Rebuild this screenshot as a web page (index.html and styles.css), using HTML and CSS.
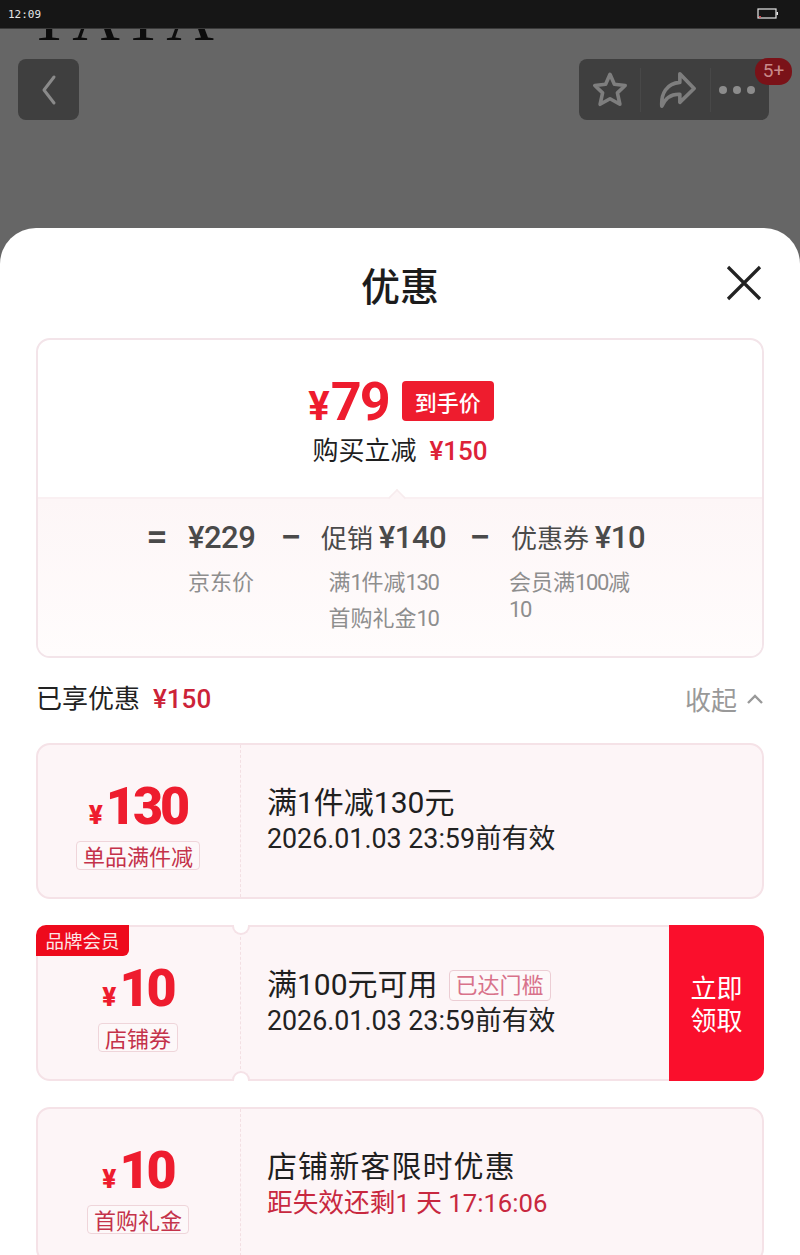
FILE: index.html
```html
<!DOCTYPE html>
<html>
<head>
  <meta name="viewport" content="width=device-width, initial-scale=1.0">
  <link rel="stylesheet" href="styles.css">
</head>

<body>
  <div class="statusbar">
    <span class="clock">12:09</span>
    <svg class="battery" width="22" height="12" viewBox="0 0 22 12">
      <rect x="1" y="1" width="18" height="9" fill="none" stroke="#e8e8e8" stroke-width="1.2"/>
      <rect x="2" y="8" width="2" height="1.5" fill="#d8434a"/>
      <rect x="19.5" y="4" width="1.5" height="3" fill="#e8e8e8"/>
    </svg>
  </div>

  <div class="backdrop">
    <div class="brand-clip"><div class="brand">TATA</div></div>
    <div class="topbtns">
      <div class="btn back">
        <svg width="20" height="32" viewBox="0 0 20 32"><path d="M15 3 L5 16 L15 29" fill="none" stroke="#8a8a8a" stroke-width="3" stroke-linecap="round" stroke-linejoin="round"/></svg>
      </div>
      <div class="btn tools">
        <svg width="38" height="38" viewBox="0 0 40 40"><path d="M20 3.5 L24.6 14 L36 15.3 L27.8 23 L30.4 35 L20 29.2 L9.6 35 L12.2 23 L4 15.3 L15.4 14 Z" fill="none" stroke="#7e7e7e" stroke-width="3.8" stroke-linejoin="round"/></svg>
        <i class="sep s1"></i>
        <svg width="38" height="38" viewBox="0 0 40 40"><path d="M23 3 L38 18.5 L23 33 L23 24.5 C14 24 8 28 4 37 C3 24 9 13 23 12 Z" fill="none" stroke="#7e7e7e" stroke-width="3.8" stroke-linejoin="round"/></svg>
        <i class="sep s2"></i>
        <div class="dots"><i></i><i></i><i></i></div>
        <span class="badge">5+</span>
      </div>
    </div>
  </div>

  <div class="sheet">
    <div class="sheet-head">
      <h2>优惠</h2>
      <svg class="close" width="36" height="36" viewBox="0 0 36 36"><path d="M2 2 L34 34 M34 2 L2 34" stroke="#222" stroke-width="3.2" fill="none"/></svg>
    </div>

    <div class="summary">
      <div class="summary-top">
        <div class="final">
          <span class="final-price"><small>¥</small>79</span>
          <span class="final-tag">到手价</span>
        </div>
        <div class="cut">购买立减<b>¥150</b></div>
      </div>
      <div class="summary-bottom">
        <i class="notch"></i>
        <div class="calc">
          <span class="op">=</span>
          <div class="term t1">
            <div class="amount"><span class="num">¥229</span></div>
            <div class="note">京东价</div>
          </div>
          <span class="op">−</span>
          <div class="term t2">
            <div class="amount">促销 <span class="num">¥140</span></div>
            <div class="note center">满<span class="tight">1</span>件减<span class="tight">130</span><br>首购礼金<span class="tight">10</span></div>
          </div>
          <span class="op">−</span>
          <div class="term t3">
            <div class="amount">优惠券 <span class="num">¥10</span></div>
            <div class="note narrow">会员满<span class="tight">100</span>减<br><span class="tight">10</span></div>
          </div>
        </div>
      </div>
    </div>

    <div class="enjoyed">
      <div class="enjoyed-left">已享优惠<b>¥150</b></div>
      <div class="fold">收起
        <svg width="18" height="12" viewBox="0 0 18 12"><path d="M2 10 L9 3 L16 10" fill="none" stroke="#999" stroke-width="2.4"/></svg>
      </div>
    </div>

    <div class="coupon">
      <div class="coupon-left">
        <div class="money"><small>¥</small>130</div>
        <span class="kind">单品满件减</span>
      </div>
      <div class="coupon-main">
        <div class="line1">满1件减130元</div>
        <div class="line2">2026.01.03 23:59前有效</div>
      </div>
    </div>

    <div class="coupon bites">
      <span class="corner">品牌会员</span>
      <i class="bite top"></i>
      <i class="bite bottom"></i>
      <div class="coupon-left">
        <div class="money"><small>¥</small>10</div>
        <span class="kind">店铺券</span>
      </div>
      <div class="coupon-main">
        <div class="line1">满100元可用<span class="reached">已达门槛</span></div>
        <div class="line2">2026.01.03 23:59前有效</div>
      </div>
      <div class="grab">立即<br>领取</div>
    </div>

    <div class="coupon">
      <div class="coupon-left">
        <div class="money"><small>¥</small>10</div>
        <span class="kind">首购礼金</span>
      </div>
      <div class="coupon-main">
        <div class="line1 wide">店铺新客限时优惠</div>
        <div class="line2 red">距失效还剩1 天 17:16:06</div>
      </div>
    </div>
  </div>
</body>
</html>
```

FILE: styles.css
```css
html, body {
  margin: 0;
  height: 1255px;
  overflow: hidden;
  background: #fff;
}

body {
  font-family: "Noto Sans CJK SC", "Noto Sans", sans-serif;
  color: #1a1a1a;
}

.statusbar {
  height: 29px;
  background: #161616;
  border-bottom: 1px solid #3a3a3a;
  box-sizing: border-box;
  display: flex;
  align-items: center;
  justify-content: space-between;
  padding: 0 21px 0 8px;
}

.clock {
  font-family: "DejaVu Sans Mono", monospace;
  font-size: 11px;
  color: #e6e6e6;
}

.battery {
  display: block;
}

.backdrop {
  height: 240px;
  background: #666;
}

.brand-clip {
  height: 11px;
  overflow: hidden;
  padding-left: 29px;
}

.brand {
  font-family: "Liberation Serif", serif;
  font-size: 66px;
  line-height: 66px;
  margin-top: -44px;
  color: #0c0c0c;
  font-kerning: none;
  letter-spacing: 3px;
}

.topbtns {
  display: flex;
  justify-content: space-between;
  padding: 19px 31px 0 18px;
}

.btn {
  height: 61px;
  background: #3f3f3f;
  border-radius: 8px;
  display: flex;
  align-items: center;
}

.back {
  width: 61px;
  justify-content: center;
}

.tools {
  width: 190px;
  padding-left: 12px;
  box-sizing: border-box;
  position: relative;
}

.sep {
  width: 1px;
  height: 44px;
  background: #484848;
}

.s1 { margin: 0 17px 0 11px; }
.s2 { margin: 0 8px 0 14px; }

.dots {
  display: flex;
  gap: 6px;
}

.dots i {
  width: 8px;
  height: 8px;
  border-radius: 50%;
  background: #8c8c8c;
}

.badge {
  position: absolute;
  left: 176px;
  top: -1px;
  width: 37px;
  height: 27px;
  line-height: 25px;
  border-radius: 13px;
  background: #7a1218;
  color: #c98a8a;
  font-size: 19px;
  text-align: center;
  font-family: "Roboto", sans-serif;
}

.sheet {
  margin-top: -41px;
  position: relative;
  height: 1027px;
  background: #fff;
  border-radius: 36px 36px 0 0;
  padding: 0 36px;
  overflow: hidden;
}

.sheet-head {
  height: 110px;
  display: flex;
  justify-content: center;
  align-items: flex-start;
  position: relative;
}

.sheet-head h2 {
  margin: 29px 0 0;
  font-size: 39px;
  line-height: 54px;
  font-weight: 500;
  color: #1c1c1c;
}

.close {
  position: absolute;
  right: 2px;
  top: 37px;
}

.summary {
  height: 320px;
  box-sizing: border-box;
  border: 2px solid #f3e4e9;
  border-radius: 14px;
  overflow: hidden;
  display: flex;
  flex-direction: column;
}

.summary-top {
  height: 157px;
  box-sizing: border-box;
  padding-top: 38px;
  display: flex;
  flex-direction: column;
  align-items: center;
}

.final {
  display: flex;
  align-items: center;
  height: 52px;
  margin-left: 2px;
}

.final-price {
  font-family: "Roboto", sans-serif;
  font-size: 54px;
  line-height: 52px;
  font-weight: 700;
  letter-spacing: -2px;
  color: #ee1c2e;
}

.final-price small {
  font-size: 40px;
  margin-right: 3px;
}

.final-tag {
  margin-left: 13px;
  margin-top: -6px;
  width: 92px;
  height: 40px;
  border-radius: 4px;
  background: #ee1c2e;
  color: #fff;
  font-size: 22px;
  line-height: 40px;
  text-align: center;
  font-weight: 500;
}

.cut {
  margin-top: 1px;
  font-size: 26px;
  line-height: 36px;
  color: #1f1f1f;
}

.cut b {
  margin-left: 13px;
  font-family: "Roboto", sans-serif;
  font-weight: 500;
  color: #dd2238;
  line-height: 0;
}

.summary-bottom {
  flex: 1;
  background: linear-gradient(#fdf6f7, #fffcfc);
  border-top: 2px solid #faf0f2;
  position: relative;
}

.notch {
  position: absolute;
  left: 351px;
  top: -9px;
  width: 14px;
  height: 14px;
  background: #fdf6f7;
  border-left: 2px solid #f7ecee;
  border-top: 2px solid #f7ecee;
  transform: rotate(45deg) scale(.8);
}

.calc {
  display: flex;
  align-items: flex-start;
  padding: 18px 0 0 108px;
}

.op {
  font-family: "Roboto", sans-serif;
  font-size: 38px;
  line-height: 40px;
  font-weight: 500;
  color: #4a4a4a;
  width: 22px;
  text-align: center;
}

.t1 { width: 72px; margin: 0 20px 0 20px; }
.t2 { width: 126px; margin: 0 22px 0 19px; }
.t3 { width: 135px; margin-left: 20px; }

.amount {
  font-size: 26px;
  line-height: 40px;
  color: #4a4a4a;
  white-space: nowrap;
}

.num {
  font-family: "Roboto", sans-serif;
  font-size: 31px;
  font-weight: 500;
  letter-spacing: -.5px;
  line-height: 0;
}

.note {
  margin-top: 5px;
  font-size: 22px;
  line-height: 36px;
  color: #8e8e8e;
}

.tight {
  font-family: "Roboto", sans-serif;
  letter-spacing: -1.4px;
  line-height: 0;
}

.note.center {
  text-align: center;
  margin-left: -1px;
  white-space: nowrap;
}

.note.narrow {
  line-height: 27px;
  margin-top: 10px;
  margin-left: -2px;
  white-space: nowrap;
}

.enjoyed {
  height: 85px;
  box-sizing: border-box;
  display: flex;
  justify-content: space-between;
  align-items: flex-start;
  padding-top: 21px;
}

.enjoyed-left {
  font-size: 26px;
  line-height: 36px;
  color: #222;
}

.enjoyed-left b {
  margin-left: 13px;
  font-family: "Roboto", sans-serif;
  font-weight: 500;
  color: #cc2338;
  line-height: 0;
}

.fold {
  font-size: 26px;
  line-height: 40px;
  color: #999;
  display: flex;
  align-items: center;
  gap: 9px;
}

.coupon {
  position: relative;
  height: 156px;
  margin-bottom: 26px;
  box-sizing: border-box;
  border: 2px solid #f5e2e7;
  border-radius: 14px;
  background: #fdf5f7;
  display: flex;
}

.coupon-left {
  width: 203px;
  flex: none;
  box-sizing: border-box;
  border-right: 1px dashed #f3dfe3;
  display: flex;
  flex-direction: column;
  align-items: center;
  padding: 37px 2px 0 0;
}

.money {
  font-family: "Roboto", sans-serif;
  font-weight: 900;
  font-size: 52px;
  line-height: 50px;
  letter-spacing: -3px;
  color: #ee1c2e;
}

.money small {
  font-size: 26px;
  margin-right: 6px;
}

.kind {
  border: 1px solid #efd5da;
  border-radius: 4px;
  background: #fdf8f9;
  padding: 0 6px;
  font-size: 22px;
  line-height: 27px;
  color: #c4324a;
  margin-top: 1px;
}

.coupon-main {
  flex: 1;
  padding: 38px 0 0 26px;
}

.line1 {
  font-family: "Roboto", "Noto Sans CJK SC", sans-serif;
  font-size: 30px;
  line-height: 40px;
  color: #1f1f1f;
  display: flex;
  align-items: center;
}

.line1.wide {
  letter-spacing: 1.1px;
}

.line2 {
  font-family: "Roboto", "Noto Sans CJK SC", sans-serif;
  font-size: 26.8px;
  line-height: 32px;
  color: #222;
}

.line2.red {
  font-size: 25.7px;
  color: #c8283f;
}

.reached {
  margin-left: 11px;
  border: 1px solid #eccdd4;
  border-radius: 4px;
  background: #fdf8f9;
  padding: 0 6px;
  font-size: 22px;
  line-height: 29px;
  color: #d8728a;
}

.corner {
  position: absolute;
  left: -2px;
  top: -2px;
  width: 93px;
  height: 31px;
  background: #ee0a1c;
  border-radius: 10px 0 6px 0;
  color: #fbe6e6;
  font-size: 18.5px;
  line-height: 31px;
  text-align: center;
}

.bite {
  position: absolute;
  left: 194px;
  width: 14px;
  height: 8px;
  background: #fff;
  border: 2px solid #f5e2e7;
}

.bite.top {
  top: -2px;
  border-top: 0;
  border-radius: 0 0 9px 9px;
}

.bite.bottom {
  bottom: -2px;
  border-bottom: 0;
  border-radius: 9px 9px 0 0;
}

.grab {
  width: 95px;
  flex: none;
  margin: -2px -2px -2px 0;
  border-radius: 0 12px 12px 0;
  background: #fa0f2c;
  color: #fff;
  font-size: 26px;
  line-height: 32px;
  display: flex;
  align-items: center;
  justify-content: center;
  text-align: center;
}
```
